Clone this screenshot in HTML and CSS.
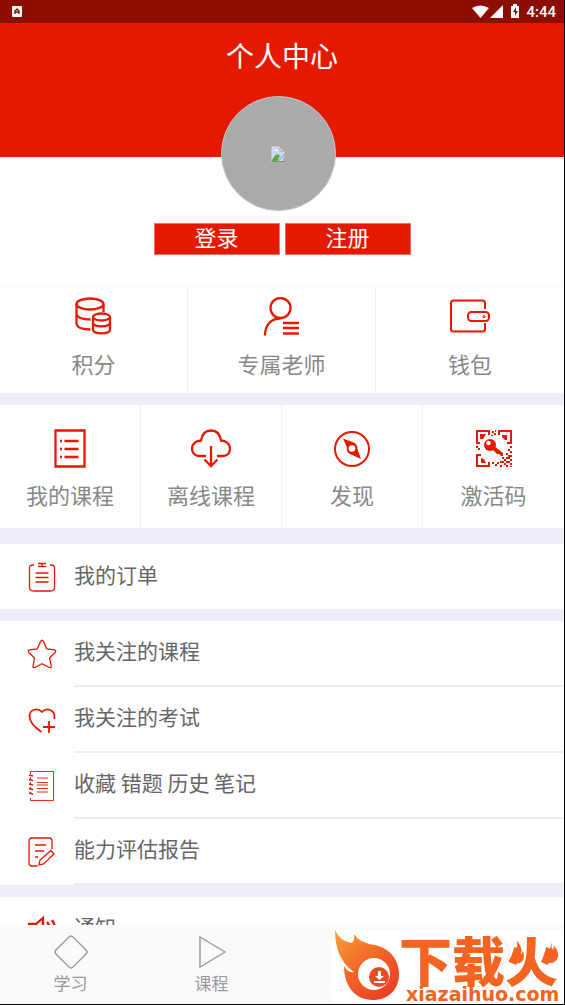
FILE: index.html
```html
<!DOCTYPE html>
<html lang="zh-CN">
<head>
<meta charset="utf-8">
<meta name="viewport" content="width=device-width, initial-scale=1">
<title>个人中心</title>
<link rel="stylesheet" href="styles.css">
</head>
<body>
<div class="app">
  <div class="status">
    <svg class="status-app" viewBox="0 0 10 11" width="10" height="11"><rect width="10" height="11" rx="1" fill="#fff"/><path d="M3 8V5l2-2 2 2v3M3 6h4" fill="none" stroke="#8b0e00" stroke-width="1.4"/></svg>
    <svg viewBox="0 0 50 16" width="50" height="16" fill="#fff">
      <path d="M0 4Q8-1 17 4L8.500 14z"/><path d="M31 1v13H18z"/>
      <path d="M39 2h2V0h4v2h2v12h-8z"/><path d="M44 3l-3 5h2v4l3-5h-2z" fill="#8b0e00"/>
    </svg>
    <span class="clock">4:44</span>
  </div>

  <main class="content">
    <header class="hero"><h1>个人中心</h1></header>
    <section class="profile">
      <div class="avatar">
        <svg viewBox="0 0 14 16" width="14" height="16">
          <path d="M1 1h8l4 4v10H1z" fill="#c6d8fa" stroke="#e2e2e5"/>
          <path d="M3 5q2-3 4 0z" fill="#fff"/><path d="M1 14q5-9 8-4l-3 5H1z" fill="#57ad38"/>
          <path d="M9 1v4h4z" fill="#f5f5f5" stroke="#888" stroke-width=".7"/>
          <path d="M14 7L6 15h2l6-6z" fill="#aaa"/><path d="M1 15.500h12v-4" fill="none" stroke="#888"/>
        </svg>
      </div>
      <div class="auth">
        <button type="button">登录</button>
        <button type="button">注册</button>
      </div>
    </section>

    <nav class="tiles tiles-three">
      <a class="tile" href="#points">
        <svg viewBox="0 0 40 40" width="40" height="40" class="line">
          <ellipse cx="16" cy="7" rx="13.500" ry="5.500"/><path d="M2.500 7v20c1 4 7 5.500 14 5.500M29.500 7v8M2.500 17c1 4 7 5.500 14 5.500"/>
          <ellipse cx="27.500" cy="20" rx="8.500" ry="3.500"/><path d="M19 20v13c1 4.500 16 4.500 17 0V20M19 26c1 4.500 16 4.500 17 0"/>
        </svg>
        <span>积分</span>
      </a>
      <a class="tile" href="#teacher">
        <svg viewBox="0 0 40 40" width="40" height="40" class="line">
          <circle cx="18.500" cy="11" r="10"/><path d="M3 38.500C3 28 9 21.500 18.500 21.500M21 26h16M21 31h16M21 36.500h16"/>
        </svg>
        <span>专属老师</span>
      </a>
      <a class="tile" href="#wallet">
        <svg viewBox="0 0 40 40" width="40" height="40" class="line thin">
          <path d="M35 12V6q0-2.500-2.500-2.500h-29Q1 3.500 1 6v26q0 2.500 2.500 2.500h29Q35 34.500 35 32v-6"/>
          <rect x="18" y="15" width="21" height="9" rx="3.500"/><circle cx="34" cy="19.500" r=".5"/>
        </svg>
        <span>钱包</span>
      </a>
    </nav>

    <nav class="tiles tiles-four">
      <a class="tile" href="#courses">
        <svg viewBox="0 0 40 40" width="40" height="40" class="line">
          <path d="M5.500 2.500h29v36h-29zM14.500 13h14M14.500 21h14M14.500 29h14M10 13h2M10 21h2M10 29h2"/>
        </svg>
        <span>我的课程</span>
      </a>
      <a class="tile" href="#offline">
        <svg viewBox="0 0 40 40" width="40" height="40" class="line">
          <path d="M15 28H9C3 28 1 24 1 20.500c0-4.500 4-8 9-8C11 6 15 2.500 20 2.500s9 3.500 10 10c5 0 9 3.500 9 8S36 28 32 28h-6M20 18v20M13.500 31.500L20 38l6.500-6.500"/>
        </svg>
        <span>离线课程</span>
      </a>
      <a class="tile" href="#discover">
        <svg viewBox="0 0 40 40" width="40" height="40">
          <circle cx="20" cy="21" r="17" fill="none" stroke="#e51900" stroke-width="2"/>
          <path d="M11 10.500L23 15q3 3 2.500 6L29 31 17 25.500q-3-3-2-6z" fill="#e51900"/><circle cx="20" cy="20.500" r="3.300" fill="#fff"/>
        </svg>
        <span>发现</span>
      </a>
      <a class="tile" href="#activate">
        <svg viewBox="0 0 40 40" width="40" height="40" fill="#e51900">
          <path fill-rule="evenodd" d="M2 2h14v5h-2V4H4v10h2v2H2zM24 2h14v14h-5v-2h3V4H26v3h-2zM2 26h5v2H4v9h10v-3h2v5H2z"/>
          <path d="M6 6h6l-3 5H6zM28 7h5v5h-2l-3-3zM7 30l3 1 2 4H7zM18 3h2v2h-2zM20 5h2v2h-2zM17 7h2v1h-2zM21 2h1v2h-1zM2 18h2v2H2zM4 20h2v2H4zM18 34h2v2h-2zM21 36h2v2h-2zM23 34h2v2h-2zM36 18h2v2h-2zM34 21h2v2h-2zM36 23h2v2h-2z"/>
          <path d="M36 27h2v2h-2zM32 25h2v2h-2zM34 27h2v2h-2zM32 29h2v2h-2zM36 31h2v2h-2zM34 33h2v2h-2zM36 35h2v2h-2zM32 33h2v2h-2zM30 31h2v2h-2zM28 33h2v2h-2zM34 29h2v2h-2zM30 35h2v2h-2zM26 37h2v2h-2zM32 37h2v2h-2zM28 29h2v2h-2zM36 38h2v1h-2zM26 33h2v2h-2z"/>
          <path d="M20 18l9 7v3l-2 0-2-2-2 0-5-5z"/><circle cx="16" cy="17" r="6"/><circle cx="14.500" cy="15" r="2.300" fill="#fff"/>
        </svg>
        <span>激活码</span>
      </a>
    </nav>

    <nav class="list list-first">
      <a class="row" href="#orders">
        <svg viewBox="0 0 30 30" width="30" height="30" class="line fine">
          <path d="M7 3H5.500Q2.500 3 2.500 6v19q0 4 4 4h17q4 0 4-4V6q0-3-3-3H23M11 1.500h8M11 4.500h8M15 1.500v3M8.500 11h13M8.500 15.500h13M8.500 20h13"/>
        </svg>
        <span class="label">我的订单</span>
      </a>
    </nav>

    <nav class="list">
      <a class="row" href="#followed-courses">
        <svg viewBox="0 0 30 30" width="30" height="30" class="line fine">
          <path d="M13.500 2.500q1.500-2.500 3 0l3.200 7.300 7.500 1q2.500.7 1 2.700L22.500 19l1.800 8q0 2.200-2 1.500L15 24.700l-7 3.800q-2.300.7-2-1.500L7.500 19 1.800 13.500q-1.500-2 1-2.700l7.500-1z"/>
        </svg>
        <span class="label">我关注的课程</span>
      </a>
      <a class="row" href="#followed-exams">
        <svg viewBox="0 0 30 30" width="30" height="30" class="line fine">
          <path class="heavy" d="M14.500 27C8 22.500 2.500 17 2.500 11.500 2.500 4 11 2.500 15 7c4-4.500 12.500-3 12.500 5q0 1-.4 2M22 16v12M16 22h12"/>
        </svg>
        <span class="label">我关注的考试</span>
      </a>
      <a class="row" href="#notes">
        <svg viewBox="0 0 30 30" width="30" height="30" class="line hair">
          <path d="M3.500 3V.5h23v29h-23V27M3.500 6v2M3.500 11v2M3.500 16v2M3.500 21v2M10 7h11M10 11.500h11M10 14h11M10 17.500h11M10 21h11"/>
          <path class="heavy" d="M2 4l4 1M2 8.500l4 1M2 13l4 1M2 17.500l4 1M2 22l4 1"/>
        </svg>
        <span class="label">收藏 错题 历史 笔记</span>
      </a>
      <a class="row" href="#report">
        <svg viewBox="0 0 30 30" width="30" height="30" class="line fine">
          <path d="M10.500 29H5q-3 0-3-3V4q0-3 3-3h17q3 0 3 3v8M8 8h11M8 14h9M8 20h3M12 28l1-5L24 13.500l3 3.500-10.500 10z"/>
        </svg>
        <span class="label">能力评估报告</span>
      </a>
    </nav>

    <nav class="list">
      <a class="row" href="#notices">
        <svg viewBox="0 0 30 30" width="30" height="30" class="line">
          <path d="M2 9h7l7-6v24l-7-6H2zM20 7q5 6 1 15M25 5q6 9 1 19"/>
        </svg>
        <span class="label">通知</span>
      </a>
    </nav>
  </main>

  <nav class="tabs">
    <a class="tab" href="#study">
      <svg viewBox="0 0 34 34" width="34" height="34"><path d="M15.500 1.500q1.500-1 3 0l14 14q1 1.500 0 3l-14 14q-1.500 1-3 0l-14-14q-1-1.500 0-3z"/></svg>
      <span>学习</span>
    </a>
    <a class="tab" href="#lessons">
      <svg viewBox="0 0 34 34" width="34" height="34"><path d="M5 2L30 17 5 32z"/></svg>
      <span>课程</span>
    </a>
    <a class="tab" href="#live">
      <svg viewBox="0 0 34 34" width="34" height="34"><path d="M17 1l14 8v16l-14 8-14-8V9z"/></svg>
      <span>直播</span>
    </a>
    <a class="tab tab-current" href="#me">
      <svg viewBox="0 0 34 34" width="34" height="34"><circle cx="17" cy="17" r="15"/><path d="M10 20q7 6 14 0"/></svg>
      <span>我的</span>
    </a>
  </nav>

  <div class="brand">
    <svg class="brand-mark" viewBox="0 0 67 72" width="67" height="72">
      <defs><linearGradient id="flame" x1="0" y1="0" x2=".7" y2="1"><stop offset="0" stop-color="#f8a33a"/><stop offset=".5" stop-color="#f36a27"/><stop offset="1" stop-color="#ee3f25"/></linearGradient></defs>
      <path d="M3 0Q8 11 19 13 23 12 22 4 27 13 43 15C57 18 67 29 67 44 67 60 56 70 41 70 23 70 12 56 12 36Q16 43 22 42 3 29 3 0z" fill="url(#flame)"/>
      <circle cx="42" cy="44" r="16" fill="#fff"/><circle cx="47" cy="47" r="10" fill="#ee4a26"/>
      <path d="M46 41h3v5h3l-4.500 4-4.500-4h3zM42 51h11v2H42z" fill="#fff"/>
    </svg>
    <div class="brand-words">
      <strong>下载火</strong>
      <span>xiazaihuo.com</span>
      <svg class="brand-flames" viewBox="0 0 48 24" width="48" height="24">
        <path d="M6 0Q13 7 8 13q2 2 4-3 3 9-3 12-7 1-8-5 0-4 4-8 2-4 1-9zM42 0q-3 5 0 9l1-4q5 5 4 11-2 6-8 6-6-1-5-8l3 3q5-3 2-8 0-5 3-9z" fill="#f36421"/>
      </svg>
    </div>
  </div>
</div>
</body>
</html>
```
FILE: styles.css
```css
* { box-sizing: border-box; }

body {
  margin: 0;
  background: #000;
  font-family: "Noto Sans CJK SC", sans-serif;
  color: #666;
}

a { color: inherit; text-decoration: none; }

.app {
  position: relative;
  display: flex;
  flex-direction: column;
  height: 100vh;
  overflow: hidden;
  background: #efedf7;
  border-right: 1px solid #000;
  border-bottom: 1px solid #000;
}

.status {
  flex: none;
  display: flex;
  align-items: center;
  height: 23px;
  padding: 0 8px 0 12px;
  background: #8b0e00;
  color: #fff;
}
.status-app { margin-right: auto; }
.clock {
  margin-left: 4px;
  font: 500 15px/24px Roboto, sans-serif;
}

.content {
  flex: 1;
  min-height: 0;
  overflow: hidden;
}

.hero {
  height: 134px;
  padding-top: 11px;
  background: #e51900;
  text-align: center;
}
.hero h1 {
  margin: 0;
  font-size: 28px;
  line-height: 42px;
  font-weight: 400;
  color: #fff;
}

.profile {
  display: flex;
  flex-direction: column;
  align-items: center;
  padding-bottom: 31px;
  padding-right: 8px;
  background: #fff;
}
.avatar {
  position: relative;
  display: flex;
  align-items: center;
  justify-content: center;
  width: 115px;
  height: 115px;
  margin-top: -61px;
  border: 1px solid #c4c4c4;
  border-radius: 50%;
  background: #aaa;
}
.auth {
  display: flex;
  gap: 5px;
  margin: 12px 0 0 8px;
}
.auth button {
  width: 126px;
  height: 32px;
  padding: 0 0 6px;
  border: 1px solid #f0705f;
  background: #e51900;
  color: #fff;
  font: inherit;
  font-size: 22px;
  line-height: 24px;
}

.tiles {
  display: grid;
  background: #fff;
}
.tiles-three { grid-template-columns: repeat(3, 1fr); border-top: 1px solid #f6f6f6; }
.tiles-four { grid-template-columns: repeat(4, 1fr); margin-top: 12px; }
.tile {
  display: flex;
  flex-direction: column;
  align-items: center;
  gap: 10px;
  padding: 10px 0 14px;
  border-right: 1px solid #f0f0f0;
  color: #888;
  font-size: 22px;
  line-height: 32px;
}
.tile:last-child { border-right: 0; }
.tiles-four .tile { padding: 23px 0 18px; }

.line {
  fill: none;
  stroke: #e51900;
  stroke-width: 2.3;
}
.thin { stroke-width: 2; }
.fine { stroke-width: 1.3; }
.hair { stroke-width: 0.9; }
.heavy { stroke-width: 1.8; }

.list {
  margin-top: 12px;
  background: #fff;
}
.list-first { margin-top: 16px; }
.row {
  display: flex;
  align-items: center;
  height: 66px;
  padding-left: 27px;
}
.list-first .row { height: 65px; }
.row svg { flex: none; }
.label {
  flex: 1;
  margin-left: 17px;
  padding-bottom: 5px;
  border-bottom: 2px solid #eee;
  font-size: 21px;
  line-height: 59px;
}
.list-first .label { border-bottom: 0; }

.tabs {
  flex: none;
  display: grid;
  grid-template-columns: repeat(4, 1fr);
  height: 79px;
  background: #fafafa;
}
.tab {
  display: flex;
  flex-direction: column;
  align-items: center;
  gap: 2px;
  padding-top: 10px;
  color: #999;
  font-size: 17px;
  line-height: 24px;
}
.tab svg { fill: none; stroke: #999; stroke-width: 1.4; }
.tab-current { color: #e51900; }
.tab-current svg { stroke: #e51900; }

.brand {
  position: absolute;
  right: 0;
  bottom: 0;
  display: flex;
  width: 232px;
  height: 74px;
  background: rgba(255, 255, 255, 0.9);
  color: #f36421;
}
.brand-mark { flex: none; }
.brand-words {
  position: relative;
  display: flex;
  flex-direction: column;
}
.brand-words strong {
  font-size: 53px;
  line-height: 58px;
  font-weight: 900;
}
.brand-words span {
  padding-left: 7px;
  font: bold 19px/12px "DejaVu Sans", sans-serif;
}
.brand-flames {
  position: absolute;
  right: 0;
  top: 11px;
}
```
